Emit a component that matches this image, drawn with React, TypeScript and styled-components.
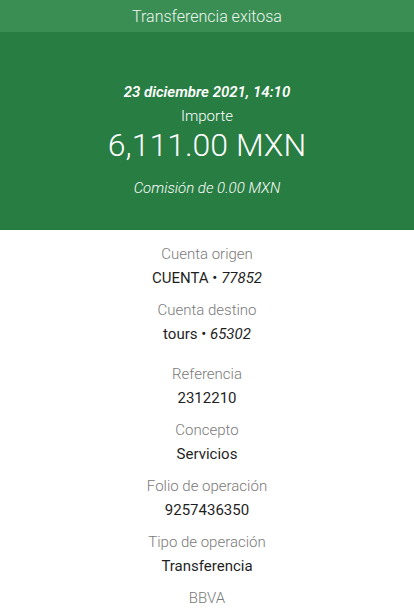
import React from 'react';
import styled, { createGlobalStyle } from 'styled-components';

const GlobalStyle = createGlobalStyle`
  html, body {
    margin: 0;
    padding: 0;
    background: #fff;
    font-family: Roboto, 'Liberation Sans', sans-serif;
  }
`;

const Page = styled.div`
  width: 414px;
  min-height: 614px;
  display: flex;
  flex-direction: column;
  background: #fff;
`;

const TopBar = styled.div`
  height: 32px;
  background: #3a8e54;
  color: #eef6f0;
  display: flex;
  align-items: center;
  justify-content: center;
  font-size: 16px;
  font-weight: 300;
`;

const Summary = styled.div`
  background: #277d42;
  color: #fff;
  display: flex;
  flex-direction: column;
  align-items: center;
  padding: 48px 0 30px;
`;

const DateLine = styled.div`
  font-size: 15px;
  font-weight: 600;
  font-style: italic;
  line-height: 24px;
`;

const SmallLine = styled.div<{ italic?: boolean }>`
  font-size: 15px;
  font-weight: 300;
  line-height: 24px;
  font-style: ${p => (p.italic ? 'italic' : 'normal')};
`;

const Amount = styled.div`
  font-size: 32px;
  font-weight: 300;
  line-height: 34px;
  margin-bottom: 14px;
`;

const Details = styled.div`
  display: flex;
  flex-direction: column;
  align-items: center;
  padding-top: 12px;
`;

const Group = styled.div<{ extra?: boolean }>`
  display: flex;
  flex-direction: column;
  align-items: center;
  margin-bottom: ${p => (p.extra ? 16 : 8)}px;
`;

const Label = styled.div`
  font-size: 15px;
  font-weight: 300;
  line-height: 24px;
  color: #7a7a7a;
`;

const Value = styled.div`
  font-size: 15px;
  font-weight: 400;
  line-height: 24px;
  color: #1f1f1f;

  em {
    font-style: italic;
  }
`;

type Row = { label: string; value: React.ReactNode; extra?: boolean };

const rows: Row[] = [
  { label: 'Cuenta origen', value: <>CUENTA • <em>77852</em></> },
  { label: 'Cuenta destino', value: <>tours • <em>65302</em></>, extra: true },
  { label: 'Referencia', value: '2312210' },
  { label: 'Concepto', value: 'Servicios' },
  { label: 'Folio de operación', value: '9257436350' },
  { label: 'Tipo de operación', value: 'Transferencia' },
];

export default function App() {
  return (
    <Page>
      <GlobalStyle />
      <TopBar>Transferencia exitosa</TopBar>
      <Summary>
        <DateLine>23 diciembre 2021, 14:10</DateLine>
        <SmallLine>Importe</SmallLine>
        <Amount>6,111.00 MXN</Amount>
        <SmallLine italic>Comisión de 0.00 MXN</SmallLine>
      </Summary>
      <Details>
        {rows.map(r => (
          <Group key={r.label} extra={r.extra}>
            <Label>{r.label}</Label>
            <Value>{r.value}</Value>
          </Group>
        ))}
        <Group>
          <Label>BBVA</Label>
        </Group>
      </Details>
    </Page>
  );
}
